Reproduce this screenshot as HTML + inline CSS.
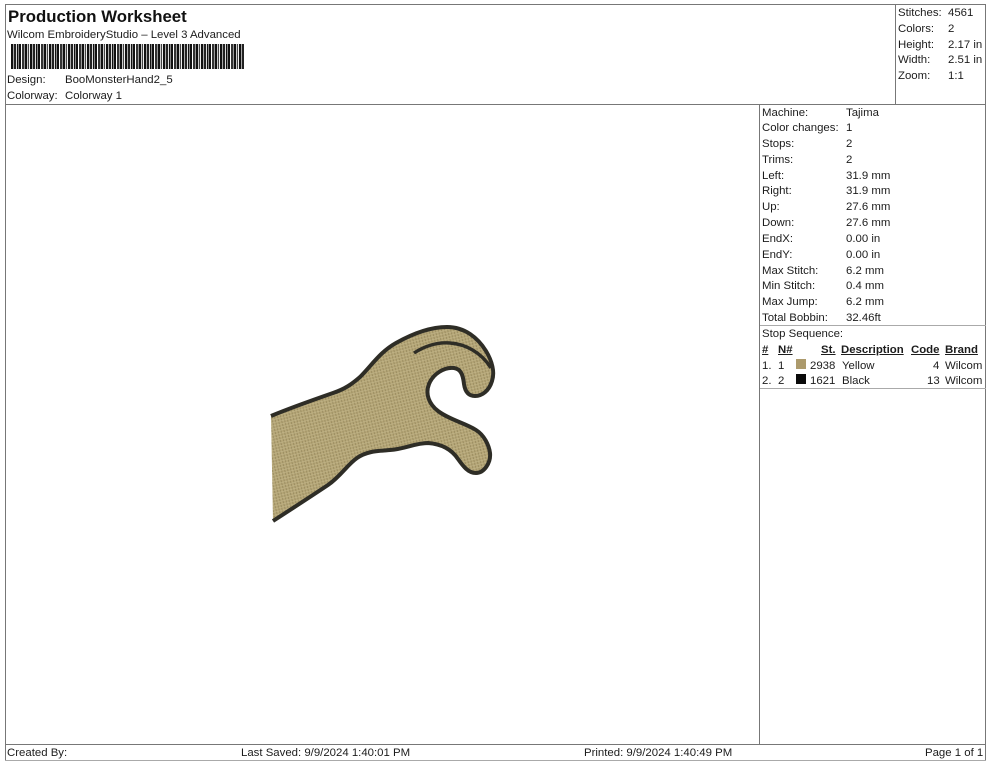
<!DOCTYPE html>
<html lang="en">
<head>
<meta charset="utf-8">
<title>Production Worksheet</title>
<style>
html,body{margin:0;padding:0;background:#fff;}
#p{position:relative;width:990px;height:762px;overflow:hidden;background:#fff;font-family:"Liberation Sans",Arial,sans-serif;font-size:11.4px;line-height:14px;color:#1c1c1c;filter:blur(0.3px);}
#p span{position:absolute;white-space:nowrap;margin-top:1px;}
#p i{position:absolute;background:#777;display:block;}
.b{font-weight:bold;text-decoration:underline;}
#bar{position:absolute;left:11px;top:44px;width:233px;height:25px;filter:blur(0.35px);
background:
repeating-linear-gradient(90deg,#111 0 2px,#aaa 2px 3px,#222 3px 5px,#ddd 5px 6px,#111 6px 7px,#888 7px 8px,#111 8px 10px,#fff 10px 11px,#333 11px 13px,#999 13px 14px,#111 14px 16px,#ccc 16px 17px,#444 17px 18px,#eee 18px 19px);
}
</style>
</head>
<body>
<div id="p">
<i style="left:5px;top:4px;width:981px;height:1px"></i>
<i style="left:5px;top:4px;width:1px;height:756px"></i>
<i style="left:985px;top:4px;width:1px;height:756px"></i>
<i style="left:5px;top:104px;width:981px;height:1px"></i>
<i style="left:895px;top:4px;width:1px;height:100px"></i>
<i style="left:759px;top:104px;width:1px;height:640px"></i>
<i style="left:760px;top:325px;width:226px;height:1px;background:#aaa"></i>
<i style="left:760px;top:388px;width:226px;height:1px;background:#aaa"></i>
<i style="left:5px;top:744px;width:981px;height:1px"></i>
<i style="left:5px;top:760px;width:981px;height:1px;background:#aaa"></i>

<span style="left:8px;top:6px;font-size:16.8px;font-weight:bold;line-height:20px;color:#111">Production Worksheet</span>
<span style="left:7px;top:27px">Wilcom EmbroideryStudio – Level 3 Advanced</span>
<div id="bar"></div>
<span style="left:7px;top:72px">Design:</span><span style="left:65px;top:72px">BooMonsterHand2_5</span>
<span style="left:7px;top:88px">Colorway:</span><span style="left:65px;top:88px">Colorway 1</span>

<span style="left:898px;top:5px">Stitches:</span><span style="left:948px;top:5px">4561</span>
<span style="left:898px;top:21px">Colors:</span><span style="left:948px;top:21px">2</span>
<span style="left:898px;top:37px">Height:</span><span style="left:948px;top:37px">2.17 in</span>
<span style="left:898px;top:52px">Width:</span><span style="left:948px;top:52px">2.51 in</span>
<span style="left:898px;top:68px">Zoom:</span><span style="left:948px;top:68px">1:1</span>

<span style="left:762px;top:105px">Machine:</span><span style="left:846px;top:105px">Tajima</span>
<span style="left:762px;top:120px">Color changes:</span><span style="left:846px;top:120px">1</span>
<span style="left:762px;top:136px">Stops:</span><span style="left:846px;top:136px">2</span>
<span style="left:762px;top:152px">Trims:</span><span style="left:846px;top:152px">2</span>
<span style="left:762px;top:168px">Left:</span><span style="left:846px;top:168px">31.9 mm</span>
<span style="left:762px;top:183px">Right:</span><span style="left:846px;top:183px">31.9 mm</span>
<span style="left:762px;top:199px">Up:</span><span style="left:846px;top:199px">27.6 mm</span>
<span style="left:762px;top:215px">Down:</span><span style="left:846px;top:215px">27.6 mm</span>
<span style="left:762px;top:231px">EndX:</span><span style="left:846px;top:231px">0.00 in</span>
<span style="left:762px;top:247px">EndY:</span><span style="left:846px;top:247px">0.00 in</span>
<span style="left:762px;top:263px">Max Stitch:</span><span style="left:846px;top:263px">6.2 mm</span>
<span style="left:762px;top:278px">Min Stitch:</span><span style="left:846px;top:278px">0.4 mm</span>
<span style="left:762px;top:294px">Max Jump:</span><span style="left:846px;top:294px">6.2 mm</span>
<span style="left:762px;top:310px">Total Bobbin:</span><span style="left:846px;top:310px">32.46ft</span>
<span style="left:762px;top:326px">Stop Sequence:</span>

<span class="b" style="left:762px;top:342px">#</span>
<span class="b" style="left:778px;top:342px">N#</span>
<span class="b" style="left:821px;top:342px">St.</span>
<span class="b" style="left:841px;top:342px">Description</span>
<span class="b" style="left:911px;top:342px">Code</span>
<span class="b" style="left:945px;top:342px">Brand</span>

<span style="left:762px;top:358px">1.</span><span style="left:778px;top:358px">1</span>
<i style="left:796px;top:359px;width:10px;height:10px;background:#ac9a6c"></i>
<span style="left:810px;top:358px">2938</span><span style="left:842px;top:358px">Yellow</span>
<span style="left:933px;top:358px">4</span><span style="left:945px;top:358px">Wilcom</span>

<span style="left:762px;top:373px">2.</span><span style="left:778px;top:373px">2</span>
<i style="left:796px;top:374px;width:10px;height:10px;background:#0a0a0a"></i>
<span style="left:810px;top:373px">1621</span><span style="left:842px;top:373px">Black</span>
<span style="left:927px;top:373px">13</span><span style="left:945px;top:373px">Wilcom</span>

<span style="left:7px;top:745px">Created By:</span>
<span style="left:241px;top:745px">Last Saved: 9/9/2024 1:40:01 PM</span>
<span style="left:584px;top:745px">Printed: 9/9/2024 1:40:49 PM</span>
<span style="left:925px;top:745px">Page 1 of 1</span>

<svg width="990" height="762" viewBox="0 0 990 762" style="position:absolute;left:0;top:0">
<defs>
<pattern id="st" width="3" height="3" patternUnits="userSpaceOnUse" patternTransform="rotate(-14)">
<rect width="3" height="3" fill="#b5a677"/>
<rect x="0" y="0" width="1" height="3" fill="#9c8e62"/>
<rect x="0" y="2" width="3" height="0.6" fill="#c4b88c"/>
</pattern>
</defs>
<path d="M271 416C290 408 310 401 333 393C345 389 352 384 360 377C372 365 380 352 396 343C412 334 430 327 447 327C465 327 478 338 486 351C492 361 495 372 492 381C489 391 482 396 475 396C468 396 465 391 464 384C463 375 461 369 454 368C444 367 433 374 429 384C425 394 429 404 438 411C450 420 465 423 476 430C484 435 489 445 490 453C491 463 484 473 476 473C468 473 463 466 458 459C452 450 442 444 428 443C415 443 405 449 390 450C378 451 367 451 357 458C347 465 341 476 328 485C310 497 290 510 273 521Z" fill="url(#st)"/>
<path d="M271 416C290 408 310 401 333 393C345 389 352 384 360 377C372 365 380 352 396 343C412 334 430 327 447 327C465 327 478 338 486 351C492 361 495 372 492 381C489 391 482 396 475 396C468 396 465 391 464 384C463 375 461 369 454 368C444 367 433 374 429 384C425 394 429 404 438 411C450 420 465 423 476 430C484 435 489 445 490 453C491 463 484 473 476 473C468 473 463 466 458 459C452 450 442 444 428 443C415 443 405 449 390 450C378 451 367 451 357 458C347 465 341 476 328 485C310 497 290 510 273 521" fill="none" stroke="#2e2d26" stroke-width="4" stroke-linejoin="round"/>
<path d="M414 353C425 346 437 342 450 343C465 344 481 352 491 368" fill="none" stroke="#2e2d26" stroke-width="3.4"/>
</svg>
</div>
</body>
</html>
